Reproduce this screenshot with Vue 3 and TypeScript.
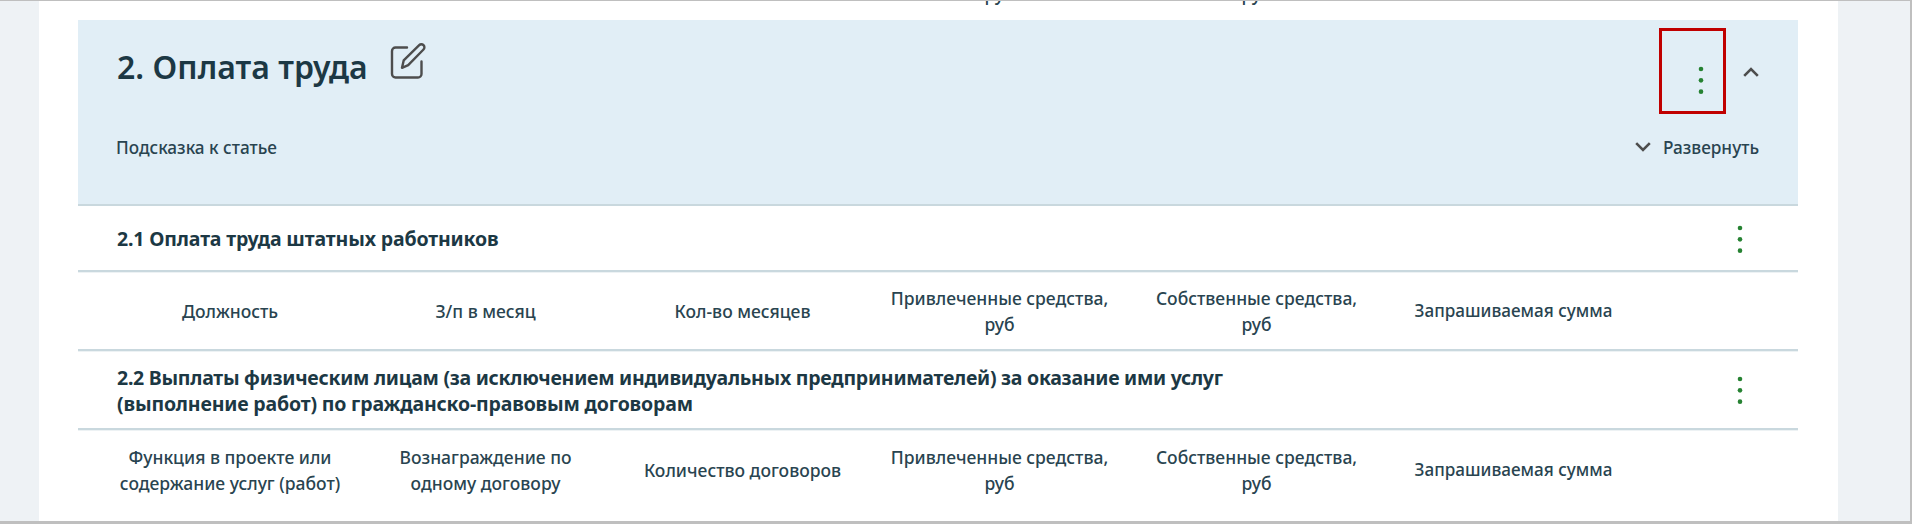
<script setup lang="ts">
interface Section {
  title: string[]
  columns: string[][]
}

const sections: Section[] = [
  {
    title: ['2.1 Оплата труда штатных работников'],
    columns: [
      ['Должность'],
      ['З/п в месяц'],
      ['Кол-во месяцев'],
      ['Привлеченные средства,', 'руб'],
      ['Собственные средства,', 'руб'],
      ['Запрашиваемая сумма'],
    ],
  },
  {
    title: [
      '2.2 Выплаты физическим лицам (за исключением индивидуальных предпринимателей) за оказание ими услуг',
      '(выполнение работ) по гражданско-правовым договорам',
    ],
    columns: [
      ['Функция в проекте или', 'содержание услуг (работ)'],
      ['Вознаграждение по', 'одному договору'],
      ['Количество договоров'],
      ['Привлеченные средства,', 'руб'],
      ['Собственные средства,', 'руб'],
      ['Запрашиваемая сумма'],
    ],
  },
]
const dots = [3, 14.33, 25.67]
</script>

<template>
  <div class="page">
    <main class="sheet">
      <div class="previous">
        <span v-for="n in 6" :key="n">{{ n === 4 || n === 5 ? 'руб' : '' }}</span>
      </div>
      <header class="article">
        <div class="article-top">
          <h1>2. Оплата труда</h1>
          <svg class="edit" viewBox="0 0 38 38" width="38" height="38">
            <path d="M18 5.500H6.500a3.500 3.500 0 0 0-3.500 3.500v23a3.500 3.500 0 0 0 3.500 3.500H29a3.500 3.500 0 0 0 3.500-3.500V19.500" />
            <path d="M13 25.800l1.700-7.400L30.200 3.200a3 3 0 0 1 4.300 4.300L19.200 23.200z" />
          </svg>
          <button class="menu" aria-label="Меню">
            <svg width="6" height="29" viewBox="0 0 6 29"><circle v-for="y in dots" :key="y" cx="3" :cy="y" r="2.3" /></svg>
          </button>
          <svg class="chevron up" viewBox="0 0 16 10" width="16" height="10"><path d="M1.200 8.800 8 2l6.800 6.800" /></svg>
        </div>
        <div class="article-hint">
          <span class="hint">Подсказка к статье</span>
          <span class="expand">
            <svg class="chevron" viewBox="0 0 16 10" width="16" height="10"><path d="M1.200 1.200 8 8l6.800-6.800" /></svg>
            <span class="expand-label">Развернуть</span>
          </span>
        </div>
      </header>
      <section v-for="(s, i) in sections" :key="i">
        <div class="row heading">
          <h2><span v-for="(l, k) in s.title" :key="k" :class="'t' + i + k">{{ l }}</span></h2>
          <svg class="row-menu" width="6" height="29" viewBox="0 0 6 29"><circle v-for="y in dots" :key="y" cx="3" :cy="y" r="2.3" /></svg>
        </div>
        <div class="row columns">
          <div v-for="(c, k) in s.columns" :key="k" :class="'c' + k">
            <span v-for="l in c" :key="l">{{ l }}</span>
          </div>
        </div>
      </section>
    </main>
  </div>
</template>

<style>
body { margin: 0; }
</style>

<style scoped>
.page {
  box-sizing: border-box;
  height: 524px;
  overflow: hidden;
  border: solid #bfbfbf;
  border-width: 1px 2px 3px 0;
  background: #eef2f5;
  font-family: 'Noto Sans', 'Open Sans', sans-serif;
  font-weight: 500;
  font-size: 17.5px;
  line-height: 26px;
  color: #294450;
  white-space: nowrap;
}
.sheet {
  box-sizing: border-box;
  width: 1799px;
  height: 520px;
  margin-left: 39px;
  padding: 0 40px 0 39px;
  background: #fff;
}
.previous, .columns {
  display: grid;
  grid-template-columns: 254px repeat(5, 257px);
  padding-left: 25px;
  text-align: center;
}
.previous { height: 19px; }
.previous span { margin-top: -20px; }
.article {
  box-sizing: border-box;
  height: 186px;
  background: #e1eef6;
  border-bottom: 2px solid #c9d8de;
  padding: 8px 39px 0 39px;
}
.article-top { display: flex; height: 86px; }
h1 {
  margin: 19px 0 0;
  width: 272px;
  font-size: 32px;
  line-height: 40px;
  font-weight: 600;
  letter-spacing: 0.05px;
  color: #1c3844;
}
.edit { margin-top: 14px; }
.edit path, .chevron path {
  fill: none;
  stroke: #4d4d4d;
  stroke-width: 2.4;
  stroke-linejoin: round;
  stroke-linecap: round;
}
.chevron path { stroke-width: 2.6; stroke-linecap: butt; stroke-linejoin: miter; }
circle { fill: #268232; }
.menu {
  box-sizing: border-box;
  width: 67px;
  height: 86px;
  margin-left: auto;
  padding: 35px 0 0 36px;
  border: 3px solid #c00000;
  background: none;
  display: flex;
  align-items: flex-start;
  justify-content: flex-start;
}
.menu svg { display: block; }
.up { margin: 39px 0 0 17.5px; }
.article-hint { display: flex; justify-content: space-between; margin-top: 21px; font-size: 17.2px; }
.hint { margin-left: -1px; }
.expand { display: flex; }
.expand svg { margin-top: 7px; }
.expand-label { margin-left: 12px; }
.row {
  box-sizing: border-box;
  height: 79px;
  border-bottom: 2px solid #c9d8de;
  box-shadow: 0 1px #edf2f4;
}
section:first-of-type .heading { height: 66px; }
section:last-child .columns { border: 0; box-shadow: none; height: 78px; }
.heading { display: flex; align-items: center; justify-content: space-between; padding: 2px 55px 0 39px; }
h2 { margin: 0; font-size: 19.5px; font-weight: 700; color: #1c3844; }
h2 span { display: block; }
.t00 { letter-spacing: -0.14px; }
.t10 { letter-spacing: -0.26px; }
.t11 { letter-spacing: -0.17px; }
.columns { align-items: center; padding-top: 1px; }
.columns span { display: block; }
.c5 { font-size: 17.1px; }
</style>
